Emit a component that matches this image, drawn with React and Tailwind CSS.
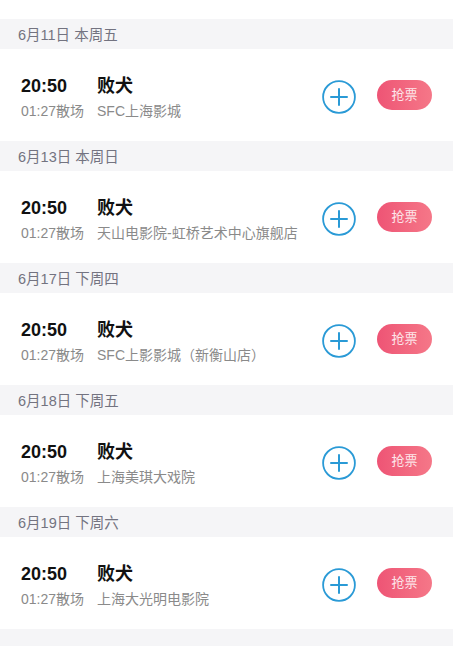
import React from "react";

const items = [
  { date: "6月11日 本周五", venue: "SFC上海影城" },
  { date: "6月13日 本周日", venue: "天山电影院-虹桥艺术中心旗舰店" },
  { date: "6月17日 下周四", venue: "SFC上影影城（新衡山店）" },
  { date: "6月18日 下周五", venue: "上海美琪大戏院" },
  { date: "6月19日 下周六", venue: "上海大光明电影院" },
];

export default function App() {
  return (
    <div
      className="w-[453px] h-[646px] bg-[#f5f5f7] overflow-hidden"
      style={{ fontFamily: '"Liberation Sans", "Noto Sans CJK SC", sans-serif' }}
    >
      <div className="h-[19px] bg-white" />
      {items.map((it, i) => (
        <div key={i}>
          <div className="h-[30px] flex items-center pl-[18px] pt-[3px] text-[14.5px] text-[#737380]">
            {it.date}
          </div>
          <div className="h-[92px] bg-white flex items-center pl-[21px] pr-[21px]">
            <div className="flex-1 flex flex-col mt-[6px]">
              <div className="flex items-center h-[24px] text-[18px] font-bold text-[#111]">
                <span className="w-[76px]">20:50</span>
                <span>败犬</span>
              </div>
              <div className="flex items-center h-[20px] mt-[3px] text-[14px] text-[#8a8a8a]">
                <span className="w-[76px]">01:27散场</span>
                <span>{it.venue}</span>
              </div>
            </div>
            <svg width="34" height="34" viewBox="0 0 34 34" className="mt-[4px]">
              <circle cx="17" cy="17" r="15.9" fill="none" stroke="#2a9ad6" strokeWidth="1.8" />
              <path d="M17 9v16M9 17h16" stroke="#2a9ad6" strokeWidth="2" strokeLinecap="round" />
            </svg>
            <div className="ml-[21px] w-[55px] h-[30px] rounded-full bg-gradient-to-r from-[#ee5475] to-[#f57788] flex items-center justify-center text-[13px] text-[#fde6ea]">
              抢票
            </div>
          </div>
        </div>
      ))}
    </div>
  );
}
